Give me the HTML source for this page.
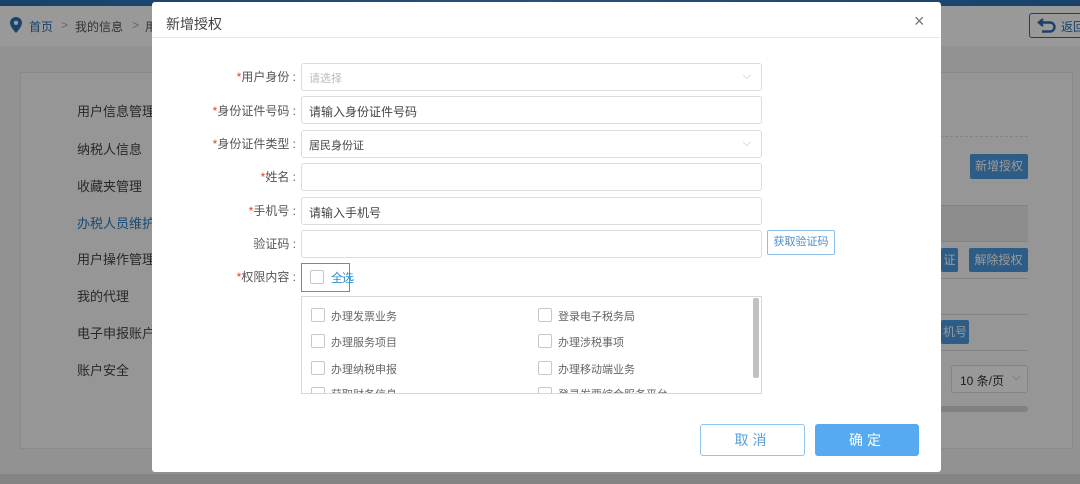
<!DOCTYPE html>
<html><head><meta charset="utf-8"><style>
*{box-sizing:border-box;margin:0;padding:0}
html,body{background:#939393}
body{width:1080px;height:484px;overflow:hidden;font-family:"Liberation Sans","Noto Sans CJK SC",sans-serif;position:relative;color:#333;white-space:nowrap}
.abs{position:absolute}
.bg{left:0;top:0;width:1080px;height:484px;background:#f4f4f4}
.topbar{left:0;top:0;width:1080px;height:6px;background:linear-gradient(90deg,#2a6db0,#3b8ad0,#2a6db0)}
.crumb{left:0;top:6px;width:1080px;height:40px;background:#ffffff;font-size:12px;color:#555}
.card{left:20px;top:72px;width:1053px;height:377px;background:#fafafa;border:1px solid #e6e6e6}
.menu{font-size:13px;color:#444;left:77px}
.bbtn{background:#4b9be0;color:#fff;font-size:12px;border-radius:2px;text-align:center}
.ov{left:0;top:0;width:1080px;height:484px;background:rgba(0,0,0,0.4)}
.modal{left:152px;top:2px;width:789px;height:470px;background:#fff;border-radius:3px}
.lbl{font-size:12px;color:#555;text-align:right;width:150px;left:146px}
.lbl b{color:#e0442c;font-weight:normal}
.inp{left:301px;width:461px;height:28px;border:1px solid #dcdcdc;border-radius:3px;font-size:12px;color:#444;padding:6px 7px;background:#fff}
.cb{width:14px;height:14px;border:1px solid #c8c8c8;border-radius:2px;background:#fff}
.it{font-size:11px;color:#666}
.arrow{right:10px;top:6px}
</style></head><body>
<div class="abs bg"></div>
<div class="abs topbar"></div>
<div class="abs crumb">
 <svg class="abs" style="left:10px;top:11px" width="12" height="16" viewBox="0 0 12 16"><path d="M6 0C2.7 0 0 2.6 0 5.8 0 10 6 16 6 16s6-6 6-10.2C12 2.6 9.3 0 6 0z" fill="#2a6db0"/><circle cx="6" cy="5.8" r="2.2" fill="#fff"/></svg>
 <span class="abs" style="left:29px;top:12px;color:#2a6db0">首页</span>
 <span class="abs" style="left:61px;top:12px;color:#aaa">&gt;</span>
 <span class="abs" style="left:75px;top:12px">我的信息</span>
 <span class="abs" style="left:132px;top:12px;color:#aaa">&gt;</span>
 <span class="abs" style="left:145px;top:12px">用</span>
 <div class="abs" style="left:1029px;top:7px;width:60px;height:25px;border:1px solid #2a6db0;border-radius:3px"></div>
 <svg class="abs" style="left:1037px;top:11px" width="20" height="16" viewBox="0 0 20 16"><path d="M6 2L2 5.5 6 9M2 5.5h11a4.5 4.5 0 010 9H5" fill="none" stroke="#2a6db0" stroke-width="2.4"/></svg>
 <span class="abs" style="left:1061px;top:12px;color:#2a6db0">返回</span>
</div>
<div class="abs card"></div>
<div class="abs" style="left:940px;top:136px;width:88px;border-top:1px dashed #ddd"></div>
<div class="abs" style="left:940px;top:205px;width:88px;height:37px;background:#eaeaea;border-top:1px solid #ddd;border-bottom:1px solid #ddd"></div>
<div class="abs" style="left:940px;top:278px;width:88px;border-top:1px solid #ddd"></div>
<div class="abs" style="left:940px;top:314px;width:88px;border-top:1px solid #ddd"></div>
<div class="abs" style="left:940px;top:350px;width:88px;border-top:1px solid #ddd"></div>
<div class="abs" style="left:940px;top:406px;width:88px;height:6px;border-radius:3px;background:#d8d8d8"></div>
<div class="abs bbtn" style="left:970px;top:154px;width:58px;height:25px;line-height:25px">新增授权</div>
<div class="abs bbtn" style="left:941px;top:248px;width:17px;height:24px;line-height:24px;overflow:hidden">证</div>
<div class="abs bbtn" style="left:969px;top:248px;width:59px;height:24px;line-height:24px">解除授权</div>
<div class="abs bbtn" style="left:941px;top:320px;width:28px;height:24px;line-height:24px">机号</div>
<div class="abs" style="left:951px;top:365px;width:77px;height:28px;border:1px solid #ddd;border-radius:3px;font-size:12px;color:#333;padding:6px 8px;background:#fff">10 条/页</div>
<div class="abs" style="left:1012px;top:371px;font-size:11px;color:#aaa">⌵</div>
<div class="abs menu" style="top:101px">用户信息管理</div>
<div class="abs menu" style="top:139px">纳税人信息</div>
<div class="abs menu" style="top:176px">收藏夹管理</div>
<div class="abs menu" style="top:213px;color:#2a7bc0">办税人员维护</div>
<div class="abs menu" style="top:249px">用户操作管理</div>
<div class="abs menu" style="top:286px">我的代理</div>
<div class="abs menu" style="top:323px">电子申报账户</div>
<div class="abs menu" style="top:360px">账户安全</div>
<div class="abs" style="left:0;top:474px;width:1080px;height:10px;background:#dcdcdc"></div>
<div class="abs ov"></div>

<div class="abs modal">
 <div class="abs" style="left:14px;top:12px;font-size:14px;color:#444">新增授权</div>
 <div class="abs" style="left:762px;top:9px;font-size:18px;color:#777">×</div>
 <div class="abs" style="left:0;top:35px;width:789px;border-top:1px solid #e8e8e8"></div>
</div>
<div class="abs lbl" style="top:68px"><b>*</b>用户身份 :</div>
<div class="abs lbl" style="top:102px"><b>*</b>身份证件号码 :</div>
<div class="abs lbl" style="top:135px"><b>*</b>身份证件类型 :</div>
<div class="abs lbl" style="top:168px"><b>*</b>姓名 :</div>
<div class="abs lbl" style="top:202px"><b>*</b>手机号 :</div>
<div class="abs lbl" style="top:235px">验证码 :</div>
<div class="abs lbl" style="top:268px"><b>*</b>权限内容 :</div>
<div class="abs inp" style="top:63px;color:#bbb;font-size:11px">请选择<span class="abs arrow" style="color:#bbb">⌵</span></div>
<div class="abs inp" style="top:96px">请输入身份证件号码</div>
<div class="abs inp" style="top:130px;font-size:11px">居民身份证<span class="abs arrow" style="color:#bbb">⌵</span></div>
<div class="abs inp" style="top:163px"></div>
<div class="abs inp" style="top:197px">请输入手机号</div>
<div class="abs inp" style="top:230px"></div>
<div class="abs" style="left:767px;top:230px;width:68px;height:25px;border:1px solid #8fc0e8;border-radius:2px;font-size:11px;color:#4a8fcf;text-align:center;line-height:23px;background:#fff">获取验证码</div>
<div class="abs" style="left:301px;top:263px;width:49px;height:29px;border:1px solid #4a9ac4;background:#fff"></div>
<div class="abs cb" style="left:310px;top:270px"></div>
<div class="abs" style="left:331px;top:269px;font-size:12px;color:#2f8fd0;letter-spacing:-1px">全选</div>
<div class="abs" style="left:301px;top:296px;width:461px;height:98px;border:1px solid #d8d8d8;overflow:hidden;background:#fff">
 <div class="abs" style="left:451px;top:1px;width:6px;height:80px;background:#c1c1c1;border-radius:2px"></div>
 <div class="abs cb" style="left:9px;top:11px"></div><div class="abs it" style="left:29px;top:11px">办理发票业务</div>
 <div class="abs cb" style="left:236px;top:11px"></div><div class="abs it" style="left:256px;top:11px">登录电子税务局</div>
 <div class="abs cb" style="left:9px;top:37px"></div><div class="abs it" style="left:29px;top:37px">办理服务项目</div>
 <div class="abs cb" style="left:236px;top:37px"></div><div class="abs it" style="left:256px;top:37px">办理涉税事项</div>
 <div class="abs cb" style="left:9px;top:64px"></div><div class="abs it" style="left:29px;top:64px">办理纳税申报</div>
 <div class="abs cb" style="left:236px;top:64px"></div><div class="abs it" style="left:256px;top:64px">办理移动端业务</div>
 <div class="abs cb" style="left:9px;top:90px"></div><div class="abs it" style="left:29px;top:89px">获取财务信息</div>
 <div class="abs cb" style="left:236px;top:90px"></div><div class="abs it" style="left:256px;top:89px">登录发票综合服务平台</div>
</div>
<div class="abs" style="left:700px;top:424px;width:105px;height:32px;border:1px solid #8fc4ec;border-radius:3px;font-size:14px;color:#5aa0d8;text-align:center;line-height:30px;letter-spacing:4px;background:#fff">取消</div>
<div class="abs" style="left:815px;top:424px;width:104px;height:32px;background:#55aaf0;border-radius:3px;font-size:14px;color:#fff;text-align:center;line-height:32px;letter-spacing:4px">确定</div>
</body></html>
